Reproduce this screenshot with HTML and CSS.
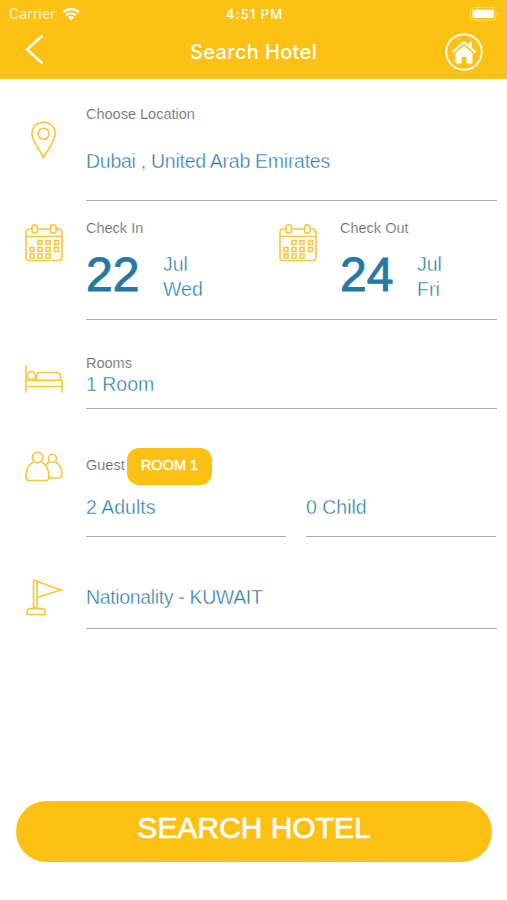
FILE: index.html
```html
<!DOCTYPE html>
<html lang="en">
<head>
  <meta charset="UTF-8">
  <meta name="viewport" content="width=device-width, initial-scale=1.0">
  <title>Search Hotel</title>
  <link rel="stylesheet" href="styles.css">
</head>
<body>

  <!-- Calendar icon shared by check in and check out -->
  <svg class="sprite">
    <symbol id="calendar" viewBox="0 0 38 38">
      <path d="M7 5H4.500Q1 5 1 8.500V33q0 3.500 3.500 3.500h29Q37 36.500 37 33V8.500Q37 5 33.500 5H31M12.500 5h13M1 12.500h36" />
      <rect x="7" y="0.800" width="5.500" height="8.400" rx="2.750" />
      <rect x="25.500" y="0.800" width="5.500" height="8.400" rx="2.750" />
      <path d="M13 16.500h4v4h-4zM21 16.500h4v4h-4zM29.500 16.500h4v4h-4zM5 23.500h4v4H5zM13 23.500h4v4h-4zM21 23.500h4v4h-4zM29.500 23.500h4v4h-4zM5 30h4v4H5zM13 30h4v4h-4zM21 30h4v4h-4z" />
    </symbol>
  </svg>

  <header class="header">
    <div class="status-bar">
      <div class="carrier">
        <span>Carrier</span>
        <svg class="wifi" viewBox="0 0 18 14">
          <path d="M1.200 5.300a11.200 11.200 0 0 1 15.600 0M4.200 8.300a6.900 6.900 0 0 1 9.600 0" />
          <path class="solid" d="M9 13.500 6.100 10.500a4.200 4.200 0 0 1 5.800 0z" />
        </svg>
      </div>
      <span class="time">4:51 PM</span>
      <svg class="battery" viewBox="0 0 30 14">
        <rect class="case" x="0.500" y="0.500" width="25.500" height="12.500" rx="4" />
        <rect class="level" x="2.500" y="2.500" width="21.500" height="8.500" rx="2" />
        <path class="case-tip" d="M27.500 4.500q2 2.200 0 4.500z" />
      </svg>
    </div>
    <div class="nav-bar">
      <a href="#" class="back">
        <svg viewBox="0 0 20 31"><path d="M18.500 1.500 3 15.500l15.500 14" /></svg>
      </a>
      <h1>Search Hotel</h1>
      <a href="#" class="home">
        <svg viewBox="0 0 38 38">
          <circle cx="19" cy="19" r="17.700" />
          <path class="roof" d="M7.500 19.500 19 9l11.500 10.500" />
          <path class="house" d="M10.500 20.300 19 12.600l8.500 7.700V29q0 1.500-1.500 1.500h-4.500V24h-5v6.500H12q-1.500 0-1.500-1.500zM24 8.500h3v7l-3-2.800z" />
        </svg>
      </a>
    </div>
  </header>

  <main class="form">
    <section class="row location">
      <svg class="icon" viewBox="0 0 38 38">
        <path d="M18.600 36.500C15.600 30 6.900 20 6.900 12.800a11.700 11.700 0 0 1 23.400 0C30.300 20 21.600 30 18.600 36.500z" />
        <circle cx="18.600" cy="12.800" r="5.500" />
      </svg>
      <div class="field">
        <label>Choose Location</label>
        <p class="value location-value">Dubai , United Arab Emirates</p>
      </div>
    </section>

    <section class="row dates">
      <svg class="icon"><use href="#calendar" /></svg>
      <div class="field date-fields">
        <div class="date">
          <label>Check In</label>
          <div class="date-value">
            <span class="day">22</span>
            <p class="value">Jul<br>Wed</p>
          </div>
        </div>
        <svg class="icon"><use href="#calendar" /></svg>
        <div class="date">
          <label>Check Out</label>
          <div class="date-value">
            <span class="day">24</span>
            <p class="value">Jul<br>Fri</p>
          </div>
        </div>
      </div>
    </section>

    <section class="row rooms">
      <svg class="icon" viewBox="0 0 38 28">
        <path d="M1 0.500v27M1 21.500h36M1 15.300h36M37 15.300V27.500M11 14.500l1-4.500q.8-2.500 3-2.500h17q2.500 0 3 2.500l.8 5" />
        <circle cx="6.500" cy="10.500" r="4" />
      </svg>
      <div class="field">
        <label>Rooms</label>
        <p class="value">1 Room</p>
      </div>
    </section>

    <section class="row guests">
      <svg class="icon" viewBox="0 0 38 31">
        <circle cx="12.500" cy="6.500" r="5.200" />
        <path d="M8.500 11C3.500 13.500 1 18.500 1 26q0 3.500 3 3.500h17q3 0 3-3.500c0-7.500-2.500-12.500-7.500-15" />
        <circle cx="27.500" cy="7.500" r="4" />
        <path d="M24.500 11q-2 .8-3.500 2.500M30.500 11c4 2 6.500 7 6.500 13 0 2-.5 3-2.500 3H24" />
      </svg>
      <div class="field">
        <div class="guest-head">
          <label>Guest</label>
          <span class="badge">ROOM 1</span>
        </div>
        <div class="guest-fields">
          <p class="value">2 Adults</p>
          <p class="value">0 Child</p>
        </div>
      </div>
    </section>

    <section class="row nationality">
      <svg class="icon flag" viewBox="0 0 38 37">
        <path d="M8.500 1.500h3.500V28.500H8.500zM12 2.500 36 11 12 18.500M2 35.500v-2q0-4 4-4h10q4 0 4 4v2z" />
      </svg>
      <div class="field">
        <p class="value">Nationality - KUWAIT</p>
      </div>
    </section>
  </main>

  <button class="search-button">SEARCH HOTEL</button>

</body>
</html>
```
FILE: styles.css
```css
* {
  box-sizing: border-box;
}

body {
  margin: 0;
  min-height: 900px;
  display: flex;
  flex-direction: column;
  background-color: #fff;
  font-family: "Liberation Sans", Arial, sans-serif;
  color: #2878a4;
}

p,
h1 {
  margin: 0;
}

.sprite {
  display: none;
}

/* Header */
.header {
  height: 79px;
  background-color: #fdc113;
  color: #fff;
}

.status-bar {
  display: grid;
  grid-template-columns: 1fr auto 1fr;
  align-items: center;
  height: 27px;
  padding: 0 7px 0 9px;
  font-family: Inter, sans-serif;
  font-size: 14px;
}

.carrier {
  display: flex;
  align-items: center;
  gap: 6px;
  color: #fff3cb;
  letter-spacing: 0.1px;
}

.wifi {
  width: 18px;
  height: 14px;
  fill: none;
  stroke: #fff;
  stroke-width: 2.4;
}

.wifi .solid {
  fill: #fff;
  stroke: none;
}

.time {
  font-size: 13.5px;
  font-weight: 500;
  letter-spacing: 0.85px;
}

.battery {
  justify-self: end;
  width: 30px;
  height: 14px;
}

.case {
  fill: none;
  stroke: #fedb78;
}

.case-tip {
  fill: #fedb78;
}

.level {
  fill: #fff;
}

.nav-bar {
  display: flex;
  justify-content: space-between;
  align-items: center;
  height: 50px;
  padding: 0 24px;
}

.nav-bar a,
.nav-bar svg {
  display: block;
}

.nav-bar svg {
  fill: none;
  stroke: #fff;
}

.back {
  width: 38px;
  padding-bottom: 6px;
}

.back svg {
  width: 20px;
  height: 31px;
  stroke-width: 2.4;
}

.nav-bar h1 {
  font-family: Inter, sans-serif;
  font-size: 20px;
  font-weight: 500;
  letter-spacing: 0.35px;
}

.home svg {
  width: 38px;
  height: 38px;
  stroke-width: 1.8;
}

.home .roof {
  stroke-width: 2.2;
}

.home .house {
  fill: #fff;
  stroke: none;
}

/* Form rows */
.row {
  display: flex;
  padding: 0 10px 0 25px;
}

.icon {
  flex: none;
  width: 38px;
  height: 38px;
  margin-right: 23px;
  fill: none;
  stroke: #fbc538;
  stroke-width: 1.6;
}

.field {
  flex: 1;
  border-bottom: 1px solid #aaa;
}

label {
  display: block;
  font-size: 14.5px;
  line-height: 18px;
  color: #666;
  -webkit-text-stroke: 0.2px #fff;
}

/* White outline thins the strokes down to a light weight */
.value {
  font-size: 19.5px;
  line-height: 25px;
  -webkit-text-stroke: 0.4px #fff;
}

.location {
  height: 122px;
  padding-top: 26px;
}

.location .icon {
  margin-top: 16px;
}

.location-value {
  margin-top: 26px;
  letter-spacing: -0.27px;
}

.dates {
  height: 119px;
  padding-top: 18px;
}

.dates .icon {
  margin-top: 5px;
}

.date-fields {
  display: flex;
}

.date {
  width: 193px;
}

.date:last-child {
  width: auto;
}

.date-value {
  display: flex;
  gap: 24px;
  margin-top: 15px;
}

.day {
  width: 53px;
  font-size: 48px;
  line-height: 45px;
  -webkit-text-stroke: 1px #2878a4;
}

.rooms {
  height: 89px;
  padding-top: 34px;
}

.rooms .icon {
  height: 28px;
  margin-top: 11px;
}

.rooms .value {
  line-height: 24px;
}

.guests {
  height: 128px;
  padding-top: 39px;
}

.guests .icon {
  height: 31px;
  margin-top: 3px;
}

.guests .field {
  border: none;
}

.guest-head {
  display: flex;
  gap: 2px;
}

.guest-head label {
  width: 39px;
  line-height: 34px;
}

.badge {
  width: 85px;
  height: 37px;
  border-radius: 12px;
  background-color: #fdc113;
  color: #fff;
  font-size: 14.5px;
  line-height: 34px;
  text-align: center;
  -webkit-text-stroke: 0.4px #fff;
}

.guest-fields {
  display: grid;
  grid-template-columns: 200px 190px;
  gap: 20px;
}

.guest-fields .value {
  height: 52px;
  padding-top: 10px;
  border-bottom: 1px solid #aaa;
}

.nationality {
  height: 92px;
  padding-top: 43px;
}

.nationality .icon {
  height: 37px;
  margin-top: -1px;
}

.nationality .value {
  padding-top: 5px;
  letter-spacing: -0.35px;
}

/* Submit button */
.search-button {
  height: 61px;
  margin: auto 15px 38px 16px;
  padding: 0 0 8px;
  border: none;
  border-radius: 31px;
  background-color: #fdc113;
  color: #fff;
  font-family: inherit;
  font-size: 30px;
  -webkit-text-stroke: 0.7px #fff;
}
```
